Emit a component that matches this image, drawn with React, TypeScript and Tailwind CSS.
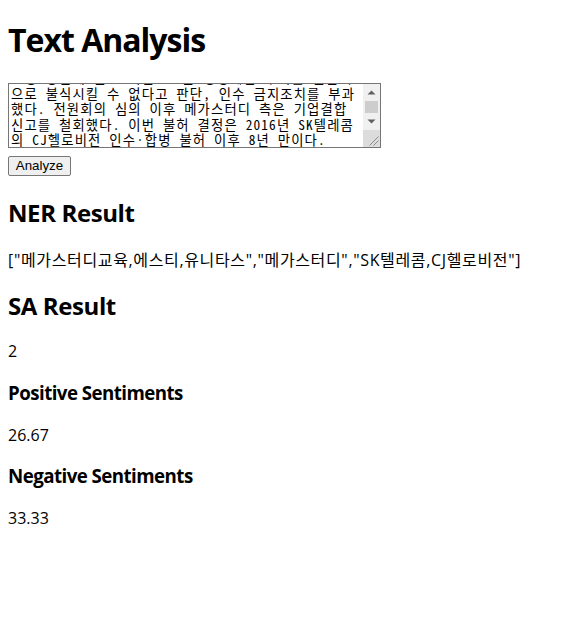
import { useLayoutEffect, useRef } from "react";

const TEXT =
  "공정거래위원회는 메가스터디교육의 에스티유니타스 인수를 금지하기로 결정했다고 밝혔다. 공정위는 두 회사가 결합할 경우 공무원 및 공인회계사 시험 온라인 강의 시장에서 경쟁이 실질적으로 제한될 우려가 크다고 봤다. 메가스터디 측은 강의료 인상 제한 등 시정방안을 제출했지만 공정위는 이를 받아들이지 않았다.\n시정 방안에 든 조치만으로는 경쟁제한 우려를 근본적으로 불식시킬 수 없다고 판단, 인수 금지조치를 부과했다. 전원회의 심의 이후 메가스터디 측은 기업결합 신고를 철회했다. 이번 불허 결정은 2016년 SK텔레콤의 CJ헬로비전 인수·합병 불허 이후 8년 만이다.";

const NER = ["메가스터디교육,에스티,유니타스", "메가스터디", "SK텔레콤,CJ헬로비전"];

export default function App() {
  const ref = useRef<HTMLTextAreaElement>(null);

  useLayoutEffect(() => {
    const el = ref.current;
    if (!el) return;
    const toBottom = () => {
      el.scrollTop = Math.max(0, el.scrollHeight - el.clientHeight - 2);
    };
    toBottom();
    const raf = requestAnimationFrame(toBottom);
    const t = setTimeout(toBottom, 100);
    return () => {
      cancelAnimationFrame(raf);
      clearTimeout(t);
    };
  }, []);

  return (
    <div className="min-h-screen bg-white p-2 text-black font-['Open_Sans','Noto_Sans_CJK_KR',sans-serif]">
      <h1 className="mt-3 mb-[23px] h-10 text-[32px] font-bold leading-[40px] tracking-[-1px]">Text Analysis</h1>

      <div className="relative h-[65px] w-[373px]">
        <textarea
          ref={ref}
          defaultValue={TEXT}
          className="block h-full w-full resize-none border border-[#767676] bg-white pt-[2px] pr-[19px] pb-0 pl-[2px] text-[13.33px] leading-[15.5px] tracking-[1.15px] text-black font-['Noto_Sans_Mono_CJK_KR','Noto_Sans_CJK_KR',monospace] [scrollbar-width:none] [&::-webkit-scrollbar]:hidden"
        />
        <div className="pointer-events-none absolute top-px right-px bottom-px flex w-[17px] flex-col bg-[#f0f0f0]">
          <div className="flex h-[17px] items-center justify-center">
            <svg width="9" height="5" viewBox="0 0 9 5">
              <path d="M0.5 4.5 L4.5 0.5 L8.5 4.5 Z" fill="#606060" />
            </svg>
          </div>
          <div className="flex flex-1 px-[2px]">
            <div className="flex-1 bg-[#cdcdcd]" />
          </div>
          <div className="flex h-[17px] items-center justify-center">
            <svg width="9" height="5" viewBox="0 0 9 5">
              <path d="M0.5 0.5 L4.5 4.5 L8.5 0.5 Z" fill="#606060" />
            </svg>
          </div>
          <div className="h-[17px] bg-[#dcdcdc]">
            <svg width="17" height="17" viewBox="0 0 17 17">
              <path d="M15.5 6.5 L6.5 15.5 M15.5 10.5 L10.5 15.5" stroke="#8a8a8a" strokeWidth="1" fill="none" />
            </svg>
          </div>
        </div>
      </div>

      <button
        type="button"
        className="mt-2 flex h-5 w-[63px] items-center justify-center rounded-[2px] border border-[#767676] bg-[#efefef] text-[13.33px] leading-4 text-black font-['Liberation_Sans',Arial,sans-serif]"
      >
        Analyze
      </button>

      <h2 className="mt-[21px] h-8 text-[24px] font-bold leading-8 tracking-[-0.4px]">NER Result</h2>
      <p className="mt-[19px] h-6 text-[16px] leading-6 tracking-[0.65px]">{JSON.stringify(NER)}</p>

      <h2 className="mt-[18px] h-8 text-[24px] font-bold leading-8 tracking-[-0.4px]">SA Result</h2>
      <p className="mt-[17px] h-6 text-[16px] leading-6">2</p>

      <h3 className="mt-[18px] h-6 text-[18.72px] font-bold leading-6 tracking-[-0.55px]">Positive Sentiments</h3>
      <p className="mt-[18px] h-6 text-[16px] leading-6">26.67</p>

      <h3 className="mt-[17px] h-6 text-[18.72px] font-bold leading-6 tracking-[-0.55px]">Negative Sentiments</h3>
      <p className="mt-[18px] h-6 text-[16px] leading-6">33.33</p>
    </div>
  );
}
